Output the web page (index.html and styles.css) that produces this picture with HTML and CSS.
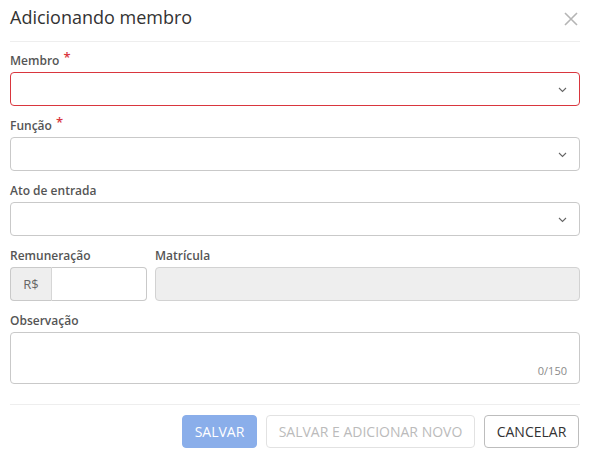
FILE: index.html
```html
<!DOCTYPE html>
<html lang="pt">
<head>
<meta charset="utf-8">
<link rel="stylesheet" href="styles.css">
</head>
<body>
<div class="modal">
  <div class="header">
    <h1 class="title">Adicionando membro</h1>
    <svg class="close" width="14" height="14" viewBox="0 0 14 14"><path d="M1 1L13 13M13 1L1 13" stroke="#b5b5b5" stroke-width="1.6" fill="none"/></svg>
  </div>
  <div class="body">
    <div class="field">
      <label class="label">Membro <span class="req">*</span></label>
      <div class="select error"><svg class="chev" width="9" height="6" viewBox="0 0 9 6"><path d="M1 1L4.5 4.5L8 1" stroke="#666" stroke-width="1.1" fill="none"/></svg></div>
    </div>
    <div class="field">
      <label class="label">Função <span class="req">*</span></label>
      <div class="select"><svg class="chev" width="9" height="6" viewBox="0 0 9 6"><path d="M1 1L4.5 4.5L8 1" stroke="#666" stroke-width="1.1" fill="none"/></svg></div>
    </div>
    <div class="field">
      <label class="label">Ato de entrada</label>
      <div class="select"><svg class="chev" width="9" height="6" viewBox="0 0 9 6"><path d="M1 1L4.5 4.5L8 1" stroke="#666" stroke-width="1.1" fill="none"/></svg></div>
    </div>
    <div class="row">
      <div class="field col-rem">
        <label class="label">Remuneração</label>
        <div class="group">
          <span class="addon">R$</span>
          <span class="ginput"></span>
        </div>
      </div>
      <div class="field col-mat">
        <label class="label">Matrícula</label>
        <div class="input disabled"></div>
      </div>
    </div>
    <div class="field last">
      <label class="label">Observação</label>
      <div class="textarea"><span class="counter">0/150</span></div>
    </div>
  </div>
  <div class="footer">
    <button class="btn primary">SALVAR</button>
    <button class="btn ghost">SALVAR E ADICIONAR NOVO</button>
    <button class="btn default">CANCELAR</button>
  </div>
</div>
</body>
</html>
```
FILE: styles.css
```css
* { box-sizing: border-box; }
html, body { margin: 0; padding: 0; background: #fff; }
body { font-family: "Open Sans", "Noto Sans", sans-serif; color: #333; }
.modal { width: 589px; padding: 0 9px 0 10px; }
.header {
  height: 42px;
  border-bottom: 1px solid #eeeeee;
  display: flex;
  align-items: flex-start;
  justify-content: space-between;
}
.title {
  margin: 4px 0 0 0;
  font-size: 18px;
  font-weight: 400;
  line-height: 26px;
  color: #333;
}
.close { margin: 12px 2px 0 0; }
.body { padding-top: 11px; }
.field { margin-bottom: 12px; }
.field.last { margin-bottom: 20px; }
.label {
  display: block;
  font-size: 12px;
  line-height: 16px;
  height: 16px;
  font-weight: 600;
  color: #555;
  margin-bottom: 3px;
}
.req { color: #d9363e; font-size: 13px; line-height: 0; position: relative; top: -3px; margin-left: 1px; }
.select, .input {
  height: 34px;
  border: 1px solid #c9c9c9;
  border-radius: 4px;
  background: #fff;
  display: flex;
  align-items: center;
  justify-content: flex-end;
  padding-right: 12px;
}
.select.error { border-color: #d9363e; }
.chev { display: block; margin-top: 2px; }
.row { display: flex; gap: 8px; }
.col-rem { width: 137px; }
.col-mat { flex: 1; }
.group { display: flex; height: 34px; }
.addon {
  width: 42px;
  border: 1px solid #c9c9c9;
  border-right: 1px solid #d6d6d6;
  border-radius: 4px 0 0 4px;
  background: #eeeeee;
  color: #666;
  font-size: 13px;
  display: flex;
  align-items: center;
  justify-content: center;
}
.ginput {
  flex: 1;
  border: 1px solid #c9c9c9;
  border-left: none;
  border-radius: 0 4px 4px 0;
  background: #fff;
}
.input.disabled { background: #eeeeee; border-color: #d2d2d2; }
.textarea {
  height: 52px;
  border: 1px solid #c9c9c9;
  border-radius: 4px;
  display: flex;
  align-items: flex-end;
  justify-content: flex-end;
  padding: 0 12px 5px 0;
}
.counter { font-size: 11px; line-height: 14px; color: #8a8a8a; }
.footer {
  border-top: 1px solid #eeeeee;
  padding-top: 10px;
  display: flex;
  justify-content: flex-end;
  gap: 9px;
  padding-right: 1px;
}
.btn {
  font-family: "Open Sans", "Noto Sans", sans-serif;
  font-size: 14px;
  height: 33px;
  border-radius: 4px;
  padding: 0 6px;
  background: #fff;
  margin: 0;
  white-space: nowrap;
}
.btn.primary { background: #8aaeea; border: 1px solid #8aaeea; color: #fff; width: 75px; }
.btn.ghost { border: 1px solid #e2e2e2; color: #bbb; width: 209px; }
.btn.default { border: 1px solid #bdbdbd; color: #333; width: 95px; }
```
